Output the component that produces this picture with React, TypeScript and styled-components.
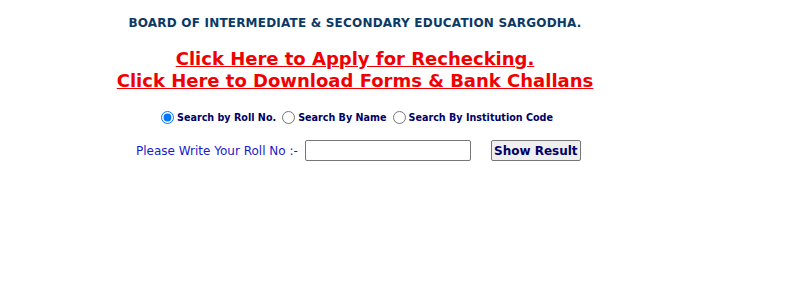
import { FC, useState } from 'react';
import styled, { createGlobalStyle } from 'styled-components';

const GlobalStyle = createGlobalStyle`
  body {
    margin: 8px;
    background: #fff;
    font-family: Verdana, "DejaVu Sans", sans-serif;
  }
`;

type SearchMode = 'roll' | 'name' | 'institution';

const App: FC = () => {
  const [mode, setMode] = useState<SearchMode>('roll');

  return (
    <>
      <GlobalStyle />
      <Page>
        <Title>BOARD OF INTERMEDIATE &amp; SECONDARY EDUCATION SARGODHA.</Title>
        <Links>
          <RedLink href="#">Click Here to Apply for Rechecking.</RedLink>
          <RedLink href="#">Click Here to Download Forms &amp; Bank Challans</RedLink>
        </Links>
        <RadioRow>
          <RadioLabel>
            <Radio type="radio" checked={mode === 'roll'} onChange={() => setMode('roll')} />
            Search by Roll No.
          </RadioLabel>
          <RadioLabel>
            <Radio type="radio" checked={mode === 'name'} onChange={() => setMode('name')} />
            Search By Name
          </RadioLabel>
          <RadioLabel>
            <Radio
              type="radio"
              checked={mode === 'institution'}
              onChange={() => setMode('institution')}
            />
            Search By Institution Code
          </RadioLabel>
        </RadioRow>
        <FormRow>
          <FieldLabel>Please Write Your Roll No :-</FieldLabel>
          <RollInput type="text" />
          <SubmitBtn type="button">Show Result</SubmitBtn>
        </FormRow>
      </Page>
    </>
  );
};

export default App;

const Page = styled.div`
  width: 694px;
  display: flex;
  flex-direction: column;
  align-items: center;
`;

const Title = styled.h1`
  margin: 7px 0 0;
  font-size: 12px;
  line-height: 16px;
  letter-spacing: 0.2px;
  font-weight: bold;
  color: #0b3a66;
`;

const Links = styled.div`
  margin-top: 17px;
  display: flex;
  flex-direction: column;
  align-items: center;
`;

const RedLink = styled.a`
  font-size: 18px;
  line-height: 22px;
  font-weight: bold;
  color: #f00000;
  text-decoration: underline;
`;

const RadioRow = styled.div`
  margin-top: 19px;
  display: flex;
  align-items: center;
  gap: 2px;
`;

const RadioLabel = styled.label`
  display: flex;
  align-items: center;
  font-size: 9.6px;
  font-weight: bold;
  color: #000066;
`;

const Radio = styled.input`
  width: 13px;
  height: 13px;
  margin: 0 3px 0 4px;
  accent-color: #0075ff;
`;

const FormRow = styled.div`
  margin-top: 16px;
  display: grid;
  grid-template-columns: 177px 186px auto;
  align-items: center;
  padding-left: 120px;
  align-self: stretch;
`;

const FieldLabel = styled.span`
  padding-left: 8px;
  font-size: 12px;
  color: #1a1acc;
`;

const RollInput = styled.input`
  width: 166px;
  height: 21px;
  box-sizing: border-box;
  border: 1px solid #767676;
  border-radius: 2px;
  padding: 1px 2px;
`;

const SubmitBtn = styled.button`
  justify-self: start;
  height: 21px;
  padding: 0 2px;
  font-family: Verdana, "DejaVu Sans", sans-serif;
  font-size: 12px;
  font-weight: bold;
  color: #000066;
  background: #efefef;
  border: 1px solid #767676;
  border-radius: 2px;
`;
